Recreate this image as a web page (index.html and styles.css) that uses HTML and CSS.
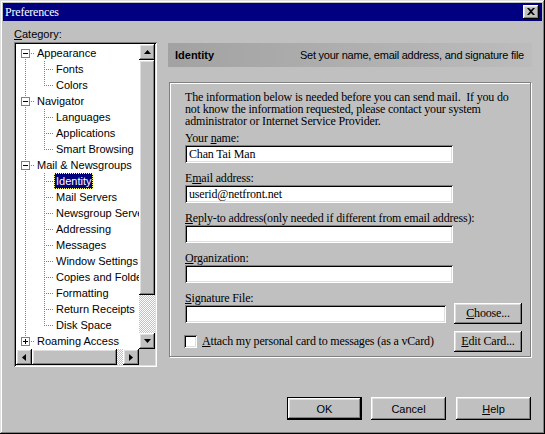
FILE: index.html
```html
<!DOCTYPE html>
<html>
<head>
<meta charset="utf-8">
<link rel="stylesheet" href="styles.css">
</head>
<body>
<div class="window">
  <div class="titlebar">
    <span class="title">Preferences</span>
    <div class="close raised"><svg width="8" height="7" viewBox="0 0 8 7"><path d="M0 0h2l2 2 2-2h2L5 3.5 8 7H6L4 5 2 7H0l3-3.5z" fill="#000"/></svg></div>
  </div>
  <div class="main">
    <div class="left">
      <div class="cat-label"><u>C</u>ategory:</div>
      <div class="treebox sunken">
        <div class="tree-top">
          <div class="tree">
            <div class="row"><span class="c first"><svg class="exp" width="9" height="9"><rect x="0.5" y="0.5" width="8" height="8" fill="#fff" stroke="#808080"/><path d="M2 4.5h5" stroke="#000"/></svg></span><span class="lbl">Appearance</span></div>
            <div class="row"><span class="c pass"></span><span class="c tee"></span><span class="lbl">Fonts</span></div>
            <div class="row"><span class="c pass"></span><span class="c end"></span><span class="lbl">Colors</span></div>
            <div class="row"><span class="c mid"><svg class="exp" width="9" height="9"><rect x="0.5" y="0.5" width="8" height="8" fill="#fff" stroke="#808080"/><path d="M2 4.5h5" stroke="#000"/></svg></span><span class="lbl">Navigator</span></div>
            <div class="row"><span class="c pass"></span><span class="c tee"></span><span class="lbl">Languages</span></div>
            <div class="row"><span class="c pass"></span><span class="c tee"></span><span class="lbl">Applications</span></div>
            <div class="row"><span class="c pass"></span><span class="c end"></span><span class="lbl">Smart Browsing</span></div>
            <div class="row"><span class="c mid"><svg class="exp" width="9" height="9"><rect x="0.5" y="0.5" width="8" height="8" fill="#fff" stroke="#808080"/><path d="M2 4.5h5" stroke="#000"/></svg></span><span class="lbl">Mail &amp; Newsgroups</span></div>
            <div class="row"><span class="c pass"></span><span class="c tee"></span><span class="lbl selected">Identity</span></div>
            <div class="row"><span class="c pass"></span><span class="c tee"></span><span class="lbl">Mail Servers</span></div>
            <div class="row"><span class="c pass"></span><span class="c tee"></span><span class="lbl">Newsgroup Servers</span></div>
            <div class="row"><span class="c pass"></span><span class="c tee"></span><span class="lbl">Addressing</span></div>
            <div class="row"><span class="c pass"></span><span class="c tee"></span><span class="lbl">Messages</span></div>
            <div class="row"><span class="c pass"></span><span class="c tee"></span><span class="lbl">Window Settings</span></div>
            <div class="row"><span class="c pass"></span><span class="c tee"></span><span class="lbl">Copies and Folders</span></div>
            <div class="row"><span class="c pass"></span><span class="c tee"></span><span class="lbl">Formatting</span></div>
            <div class="row"><span class="c pass"></span><span class="c tee"></span><span class="lbl">Return Receipts</span></div>
            <div class="row"><span class="c pass"></span><span class="c end"></span><span class="lbl">Disk Space</span></div>
            <div class="row"><span class="c last"><svg class="exp" width="9" height="9"><rect x="0.5" y="0.5" width="8" height="8" fill="#fff" stroke="#808080"/><path d="M2 4.5h5M4.5 2v5" stroke="#000"/></svg></span><span class="lbl">Roaming Access</span></div>
          </div>
          <div class="vscroll">
            <div class="sbtn raised"><svg width="7" height="4"><path d="M3.5 0L7 4H0z" fill="#000"/></svg></div>
            <div class="vthumb raised"></div>
            <div class="track"></div>
            <div class="sbtn raised"><svg width="7" height="4"><path d="M0 0h7L3.5 4z" fill="#000"/></svg></div>
          </div>
        </div>
        <div class="tree-bottom">
          <div class="hscroll">
            <div class="sbtn raised"><svg width="4" height="7"><path d="M4 0v7L0 3.5z" fill="#000"/></svg></div>
            <div class="hthumb raised"></div>
            <div class="track"></div>
            <div class="sbtn raised"><svg width="4" height="7"><path d="M0 0l4 3.5L0 7z" fill="#000"/></svg></div>
          </div>
          <div class="corner"></div>
        </div>
      </div>
    </div>
    <div class="right">
      <div class="banner">
        <span class="banner-title">Identity</span>
        <span class="banner-desc">Set your name, email address, and signature file</span>
      </div>
      <div class="group">
        <div class="intro serif">
          <div class="line">The information below is needed before you can send mail.&nbsp; If you do</div>
          <div class="line">not know the information requested, please contact your system</div>
          <div class="line">administrator or Internet Service Provider.</div>
        </div>
        <div class="field">
          <div class="flabel serif">Your <u>n</u>ame:</div>
          <div class="input sunken serif">Chan Tai Man</div>
        </div>
        <div class="field">
          <div class="flabel serif">E<u>m</u>ail address:</div>
          <div class="input sunken serif">userid@netfront.net</div>
        </div>
        <div class="field">
          <div class="flabel serif"><u>R</u>eply-to address(only needed if different from email address):</div>
          <div class="input sunken serif"></div>
        </div>
        <div class="field">
          <div class="flabel serif"><u>O</u>rganization:</div>
          <div class="input sunken serif"></div>
        </div>
        <div class="field sig">
          <div class="flabel serif"><u>S</u>ignature File:</div>
          <div class="sig-row">
            <div class="input short sunken serif"></div>
            <div class="btn side raised serif"><u>C</u>hoose...</div>
          </div>
        </div>
        <div class="check-row">
          <span class="checkbox sunken"></span>
          <span class="check-label serif"><u>A</u>ttach my personal card to messages (as a vCard)</span>
          <div class="btn side raised serif"><u>E</u>dit Card...</div>
        </div>
      </div>
    </div>
  </div>
  <div class="footer">
    <div class="btn main-btn default">OK</div>
    <div class="btn main-btn raised gap10">Cancel</div>
    <div class="btn main-btn raised"><u>H</u>elp</div>
  </div>
</div>
</body>
</html>
```

FILE: styles.css
```css
html, body {
  margin: 0;
  padding: 0;
  background: #c0c0c0;
}

.window {
  width: 545px;
  height: 434px;
  box-sizing: border-box;
  padding: 3px;
  background: #c0c0c0;
  box-shadow: inset -1px -1px #000, inset 1px 1px #dfdfdf, inset -2px -2px #808080, inset 2px 2px #fff;
  font-family: "Liberation Sans", Arial, sans-serif;
  font-size: 11px;
  color: #000;
}

.raised {
  background: #c0c0c0;
  box-shadow: inset -1px -1px #000, inset 1px 1px #fff, inset -2px -2px #808080, inset 2px 2px #dfdfdf;
}

.sunken {
  box-shadow: inset 1px 1px #808080, inset -1px -1px #fff, inset 2px 2px #000, inset -2px -2px #dfdfdf;
}

u { text-decoration: underline; text-underline-offset: 1px; }

/* title bar */
.titlebar {
  height: 18px;
  background: #000080;
  display: flex;
  justify-content: space-between;
  align-items: flex-start;
}
.title {
  color: #fff;
  font-family: "Liberation Serif", "Times New Roman", serif;
  font-size: 12px;
  letter-spacing: -0.2px;
  line-height: 18px;
  padding-left: 2px;
}
.close {
  width: 16px;
  height: 14px;
  margin: 2px 3px 0 0;
  display: flex;
  align-items: center;
  justify-content: center;
}
.close svg { display: block; margin: -1px 0 0 -1px; }

/* main area */
.main {
  display: flex;
  padding-left: 11px;
}

.left {
  width: 143px;
  flex-shrink: 0;
}
.cat-label {
  height: 21px;
  box-sizing: border-box;
  padding-top: 7px;
  line-height: 13px;
}

.treebox {
  height: 325px;
  box-sizing: border-box;
  padding: 2px;
  background: #fff;
  display: flex;
  flex-direction: column;
}
.tree-top {
  display: flex;
  height: 305px;
}
.tree {
  width: 123px;
  overflow: hidden;
  padding-top: 1px;
  box-sizing: border-box;
  background: #fff;
}
.row {
  display: flex;
  height: 16px;
  white-space: nowrap;
}
.c {
  display: block;
  width: 19px;
  height: 16px;
  flex-shrink: 0;
  --vdot: repeating-linear-gradient(to bottom, #808080 0 1px, transparent 1px 2px);
  --hdot: repeating-linear-gradient(to right, #808080 0 1px, transparent 1px 2px);
}
.c .exp { display: block; margin: 4px 0 0 5px; }
.c.first {
  background: var(--vdot) 9px 8px / 1px 8px no-repeat, var(--hdot) 15px 8px / 4px 1px no-repeat;
}
.c.mid {
  background: var(--vdot) 9px 0 / 1px 16px no-repeat, var(--hdot) 15px 8px / 4px 1px no-repeat;
}
.c.last {
  background: var(--vdot) 9px 0 / 1px 9px no-repeat, var(--hdot) 15px 8px / 4px 1px no-repeat;
}
.c.pass {
  background: var(--vdot) 9px 0 / 1px 16px no-repeat;
}
.c.tee {
  background: var(--vdot) 9px 0 / 1px 16px no-repeat, var(--hdot) 11px 8px / 8px 1px no-repeat;
}
.c.end {
  background: var(--vdot) 9px 0 / 1px 9px no-repeat, var(--hdot) 11px 8px / 8px 1px no-repeat;
}
.lbl {
  display: block;
  padding: 0 2px;
  line-height: 16px;
  height: 16px;
}
.lbl.selected {
  background: #000080;
  color: #fff;
  outline: 1px dotted #ffff80;
  outline-offset: -1px;
}

.vscroll {
  width: 16px;
  display: flex;
  flex-direction: column;
}
.sbtn {
  width: 16px;
  height: 16px;
  flex-shrink: 0;
  display: flex;
  align-items: center;
  justify-content: center;
}
.sbtn svg { display: block; }
.vthumb { height: 235px; flex-shrink: 0; }
.track {
  flex: 1;
  background-color: #fff;
  background-image: repeating-conic-gradient(#c0c0c0 0 25%, #fff 0 50%);
  background-size: 2px 2px;
}
.tree-bottom {
  display: flex;
  height: 16px;
}
.hscroll {
  width: 123px;
  display: flex;
}
.hthumb { width: 85px; flex-shrink: 0; }
.corner {
  width: 16px;
  background: #c0c0c0;
}

/* right side */
.right {
  width: 364px;
  margin-left: 11px;
  padding-top: 22px;
  flex-shrink: 0;
}
.banner {
  height: 24px;
  background: linear-gradient(to right, #a2a2a2, #bcbcbc);
  display: flex;
  justify-content: space-between;
  align-items: center;
  padding: 0 8px 0 7px;
  line-height: 24px;
}
.banner-title { font-weight: bold; }
.banner-desc { letter-spacing: -0.25px; }

.serif {
  font-family: "Liberation Serif", "Times New Roman", serif;
  font-size: 12px;
  letter-spacing: -0.17px;
}

.group {
  margin: 15px 0 0 1px;
  width: 362px;
  height: 275px;
  box-sizing: border-box;
  border: 1px solid #808080;
  box-shadow: inset 1px 1px #fff, 1px 1px 0 #fff;
  padding: 8px 8px 0 15px;
}
.intro {
  margin: 0 0 5px 0;
  white-space: nowrap;
}
.intro .line {
  height: 12px;
  line-height: 13px;
}
.field { margin-bottom: 9px; }
.flabel {
  line-height: 13px;
  height: 13px;
  white-space: nowrap;
}
.input {
  width: 268px;
  height: 18px;
  box-sizing: border-box;
  background: #fff;
  padding: 0 4px;
  line-height: 18px;
  white-space: nowrap;
}
.input.short { width: 261px; }
.sig-row {
  display: flex;
  justify-content: space-between;
  align-items: flex-start;
}
.btn {
  display: flex;
  align-items: center;
  justify-content: center;
  box-sizing: border-box;
}
.btn.side {
  width: 68px;
  height: 21px;
  margin-top: -2px;
}
.check-row {
  display: flex;
  align-items: center;
  margin-top: -2px;
}
.check-row .btn.side { margin: 0 0 0 auto; }
.checkbox {
  width: 13px;
  height: 13px;
  background: #fff;
  margin-left: -1px;
  flex-shrink: 0;
}
.check-label {
  margin-left: 5px;
  white-space: nowrap;
}

/* footer */
.footer {
  display: flex;
  justify-content: flex-end;
  margin-top: 30px;
  padding-right: 11px;
}
.main-btn {
  width: 75px;
  height: 23px;
  margin-left: 9px;
}
.main-btn.gap10 { margin-right: 1px; }
.default {
  background: #c0c0c0;
  box-shadow: inset 0 0 0 1px #000, inset -2px -2px #000, inset 2px 2px #fff, inset -3px -3px #808080, inset 3px 3px #dfdfdf;
}
```
